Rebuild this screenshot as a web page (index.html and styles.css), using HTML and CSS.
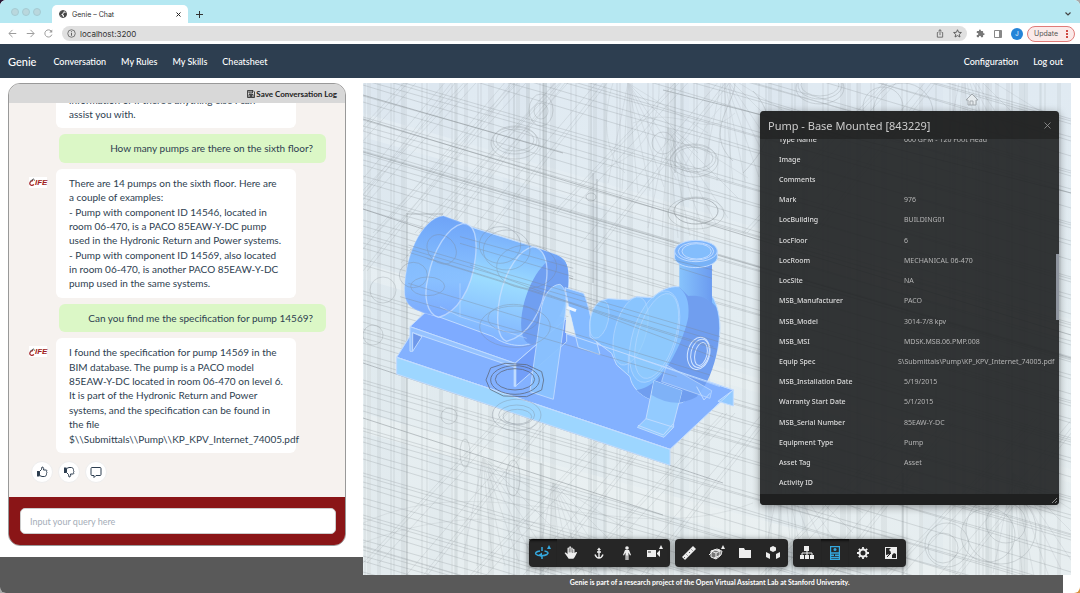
FILE: index.html
```html
<!DOCTYPE html>
<html lang="en">
<head>
    <meta charset="UTF-8">
    <meta name="viewport" content="width=device-width, initial-scale=1.0">
    <title>Genie – Chat</title>
    <link rel="stylesheet" href="styles.css">
</head>
<body>
<div class="window">
    <header class="browser">
        <div class="tabs">
            <div class="lights"><span></span><span></span><span></span></div>
            <div class="tab">
                <svg width="8" height="8" viewBox="0 0 16 16"><circle cx="8" cy="8" r="7" fill="#fff" stroke="#444" stroke-width="2"/><path fill="#444" d="M2 5l3-3 4 0 1 2-3 2 0 2-3 1 3 2 1 4-4-2-3-5zM11 5l3 1 1 4-3 4-2 0 0-3-2-2 1-2z"/></svg>
                <span>Genie – Chat</span>
                <button class="plain close-tab" aria-label="Close tab"><svg width="5" height="5" viewBox="0 0 10 10"><path d="M1 1l8 8M9 1L1 9" stroke="#222" stroke-width="2"/></svg></button>
            </div>
            <button class="plain" aria-label="New tab"><svg width="7" height="7" viewBox="0 0 8 8"><path d="M4 0v8M0 4h8" stroke="#333" stroke-width="1.2"/></svg></button>
            <button class="plain tab-menu" aria-label="Search tabs"><svg width="6" height="4" viewBox="0 0 6 4"><path d="M.5.5L3 3 5.500.5" fill="none" stroke="#444" stroke-width="1.200"/></svg></button>
        </div>
        <div class="toolbar">
            <button class="plain" aria-label="Back"><svg width="9" height="9" viewBox="0 0 12 12"><path d="M11 6H1.500M6 1.200L1.200 6 6 10.800" fill="none" stroke="#999" stroke-width="1.300"/></svg></button>
            <button class="plain" aria-label="Forward"><svg width="9" height="9" viewBox="0 0 12 12"><path d="M1 6h9.500M6 1.200L10.800 6 6 10.800" fill="none" stroke="#999" stroke-width="1.300"/></svg></button>
            <button class="plain" aria-label="Reload"><svg width="9" height="9" viewBox="0 0 12 12"><path d="M10.500 7.500A4.800 4.800 0 1 1 9.600 2.800" fill="none" stroke="#999" stroke-width="1.300"/><path d="M11 .5v4H7z" fill="#999"/></svg></button>
            <div class="address">
                <svg width="9" height="9" viewBox="0 0 12 12"><circle cx="6" cy="6" r="5" fill="none" stroke="#555"/><path d="M6 5.200V9M6 3v1.200" stroke="#555" stroke-width="1.200"/></svg>
                <input type="text" value="localhost:3200" aria-label="Address">
                <button class="plain" aria-label="Share"><svg width="8" height="9" viewBox="0 0 12 13"><path d="M3.500 5H2v7h8V5H8.500M6 9V1M3.500 3L6 .8 8.500 3" fill="none" stroke="#555" stroke-width="1.200"/></svg></button>
                <button class="plain" aria-label="Bookmark"><svg width="9" height="9" viewBox="0 0 12 12"><path d="M6 1l1.500 3.400 3.700.3-2.800 2.400.9 3.600L6 8.800l-3.300 1.900.9-3.600L.8 4.700l3.700-.3z" fill="none" stroke="#555" stroke-width="1.200"/></svg></button>
            </div>
            <button class="plain" aria-label="Extensions"><svg width="9" height="9" viewBox="0 0 24 24"><path fill="#777" d="M20.500 11H19V7a2 2 0 0 0-2-2h-4V3.500a2.500 2.500 0 0 0-5 0V5H4a2 2 0 0 0-2 2v3.800h1.500a2.700 2.700 0 0 1 0 5.400H2V20a2 2 0 0 0 2 2h3.800v-1.500a2.700 2.700 0 0 1 5.400 0V22H17a2 2 0 0 0 2-2v-4h1.500a2.500 2.500 0 0 0 0-5z"/></svg></button>
            <button class="plain" aria-label="Side panel"><svg width="8" height="8" viewBox="0 0 8 8"><path d="M.5.5h7v7h-7z" fill="none" stroke="#888"/><path d="M5 .5h2.500v7H5z" fill="#888"/></svg></button>
            <button class="plain avatar">J</button>
            <button class="plain update">Update <svg width="2" height="8" viewBox="0 0 2 8"><path d="M0 0h2v2H0zM0 3h2v2H0zM0 6h2v2H0z" fill="#cf4a42"/></svg></button>
        </div>
    </header>

    <nav class="nav">
        <a class="brand" href="#">Genie</a>
        <a href="#">Conversation</a>
        <a href="#">My Rules</a>
        <a href="#">My Skills</a>
        <a href="#">Cheatsheet</a>
        <a class="right" href="#">Configuration</a>
        <a href="#">Log out</a>
    </nav>

    <main class="page">
        <section class="chat">
            <div class="chat-header">
                <button class="plain save"><svg width="8" height="8" viewBox="0 0 16 16"><path d="M1 1h11l3 3v11H1zM4 1v5h7V1M4 15V9h8v6M8 2v3M6 11h4M6 13h4" fill="none" stroke="#222" stroke-width="1.600"/></svg>Save Conversation Log</button>
            </div>
            <div class="messages">
                <div class="message"><div class="bubble">information or if there's anything else I can<br>assist you with.</div></div>
                <div class="message user"><div class="bubble">How many pumps are there on the sixth floor?</div></div>
                <div class="message">
                    <div class="logo"><svg width="6" height="8" viewBox="0 0 6 8"><path d="M5 6.500C3 8 .6 7.400.8 5.200 1 3.400 2.600 2.400 4 2.800" fill="none" stroke="#a01c20" stroke-width="1.200"/><path d="M1 3.500L4.500.8 5.500 2.800" fill="none" stroke="#666"/></svg>IFE</div>
                    <div class="bubble">There are 14 pumps on the sixth floor. Here are a couple of examples:<br>- Pump with component ID 14546, located in room 06-470, is a PACO 85EAW-Y-DC pump used in the Hydronic Return and Power systems.<br>- Pump with component ID 14569, also located in room 06-470, is another PACO 85EAW-Y-DC pump used in the same systems.</div>
                </div>
                <div class="message user"><div class="bubble">Can you find me the specification for pump 14569?</div></div>
                <div class="message">
                    <div class="logo"><svg width="6" height="8" viewBox="0 0 6 8"><path d="M5 6.500C3 8 .6 7.400.8 5.200 1 3.400 2.600 2.400 4 2.800" fill="none" stroke="#a01c20" stroke-width="1.200"/><path d="M1 3.500L4.500.8 5.500 2.800" fill="none" stroke="#666"/></svg>IFE</div>
                    <div class="bubble">I found the specification for pump 14569 in the BIM database. The pump is a PACO model 85EAW-Y-DC located in room 06-470 on level 6. It is part of the Hydronic Return and Power systems, and the specification can be found in the file $\\Submittals\\Pump\\KP_KPV_Internet_74005.pdf</div>
                </div>
                <div class="feedback">
                    <button aria-label="Good answer"><svg width="12" height="12" viewBox="0 0 24 24"><path d="M2 10h5v11H2z" fill="#2d3e50"/><path d="M7 11l4-4 1-5c3 0 4 2 3 6h5c2 0 2 2 1 3 1 1 1 3 0 4 0 2 0 3-1 3 0 2-1 3-3 3h-5l-5-2z" fill="none" stroke="#2d3e50" stroke-width="2"/></svg></button>
                    <button aria-label="Bad answer"><svg width="12" height="12" viewBox="0 0 24 24"><path d="M2 3h5v11H2z" fill="#2d3e50"/><path d="M7 13l4 4 1 5c3 0 4-2 3-6h5c2 0 2-2 1-3 1-1 1-3 0-4 0-2 0-3-1-3 0-2-1-3-3-3h-5L7 5z" fill="none" stroke="#2d3e50" stroke-width="2"/></svg></button>
                    <button aria-label="Comment"><svg width="12" height="12" viewBox="0 0 24 24"><path d="M4 3h16q2 0 2 2v12q0 2-2 2h-8l-4 4v-4H4q-2 0-2-2V5q0-2 2-2z" fill="none" stroke="#2d3e50" stroke-width="2"/></svg></button>
                </div>
            </div>
            <form class="query">
                <input type="text" placeholder="Input your query here" aria-label="Input your query here">
            </form>
        </section>

        <section class="viewer">
            <svg class="scene" viewBox="0 0 708 492" preserveAspectRatio="xMidYMid slice">
                <defs>
                    <linearGradient id="sky" x1="0" y1="0" x2="0" y2="1"><stop offset="0" stop-color="#e0eaf2"/><stop offset=".5" stop-color="#e4edf1"/><stop offset="1" stop-color="#e7eef0"/></linearGradient>
                    <linearGradient id="shell" x1=".62" y1=".08" x2=".4" y2=".9"><stop offset="0" stop-color="#76a9f8"/><stop offset=".25" stop-color="#86c2ff"/><stop offset=".5" stop-color="#9cdcff"/><stop offset="1" stop-color="#82b5ff"/></linearGradient>
                    <linearGradient id="cap" x1="0" y1="0" x2="0" y2="1"><stop offset="0" stop-color="#6ba1f7"/><stop offset=".65" stop-color="#84b9ff"/><stop offset="1" stop-color="#79a5fd"/></linearGradient>
                    <linearGradient id="pipe"><stop offset="0" stop-color="#87c3fc"/><stop offset="1" stop-color="#6b9bf0"/></linearGradient>
                    <path id="beam" d="M0 0L708 206M0 3L708 211M0 9L708 208M0 14L708 228M0 25L708 224M0 31L708 243"/>
                    <path id="studs" d="M2 0V492M5 0V492M7 0V492M15 0V492M17 0V492M28 0V492M31 0V492M39 0V492M41 0V492M43 0V492M59 0V492M64 0V492M77 0V492M79 0V492M93 0V492"/>
                    <path id="rafter" d="M-40 150L110-10M-36 150L114-10M-24 150L122-10M-12 180L150-10M0 188L156-10M4 188L160-10"/>
                    <g id="ring"><ellipse rx="22" ry="14"/><ellipse rx="19" ry="11"/><ellipse rx="24" ry="16" cy="3"/></g>
                    <path id="fan" d="M0 0L60 90M0 0L48 96M0 0L36 104M0 0L22 108M0 0L10 110M0 0L-6 108M0 0L-20 100M0 0L70 70M0 0L80 50"/>
                </defs>
                <rect width="708" height="492" fill="url(#sky)"/>

                <!-- tinted wall panels -->
                <g fill="#c9d6e6" opacity=".12">
                    <path d="M8 0h34v492H8zM66 0h22v492H66zM140 0h26v492h-26zM228 0h14v492h-14zM310 0h16v492h-16zM402 0h40v492h-40zM560 0h20v492h-20z"/>
                    <path d="M0 30L708 236v22L0 54zM0 180L708 386v14L0 196zM0 330L708 520v20L0 350z" fill="#fff"/>
                </g>

                <g fill="none" stroke="#858d90" stroke-width=".7">
                    <g opacity=".28">
                        <use href="#studs"/><use href="#studs" x="87"/><use href="#studs" x="149"/><use href="#studs" x="226"/>
                        <use href="#studs" x="303"/><use href="#studs" x="401"/><use href="#studs" x="480"/><use href="#studs" x="585"/><use href="#studs" x="618"/>
                    </g>
                    <g opacity=".36">
                        <use href="#beam" y="-170"/><use href="#beam" y="-118"/><use href="#beam" y="-66"/><use href="#beam" y="-12"/>
                        <use href="#beam" y="34"/><use href="#beam" y="68"/><use href="#beam" y="112"/><use href="#beam" y="151"/>
                        <use href="#beam" y="208"/><use href="#beam" y="246"/><use href="#beam" y="297"/><use href="#beam" y="345"/>
                        <use href="#beam" y="390"/><use href="#beam" y="432"/><use href="#beam" y="464"/>
                    </g>
                    <g opacity=".24">
                        <use href="#rafter"/><use href="#rafter" x="50"/><use href="#rafter" x="92"/><use href="#rafter" x="-60"/>
                        <use href="#rafter" x="230" y="-20"/><use href="#rafter" x="420"/>
                        <use href="#rafter" x="40" y="330"/><use href="#rafter" x="140" y="350"/><use href="#rafter" x="250" y="340"/>
                        <use href="#rafter" x="430" y="350"/><use href="#rafter" x="560" y="345"/>
                    </g>
                    <g opacity=".2">
                        <use href="#fan" x="265" y="0"/><use href="#fan" x="305" y="45"/><use href="#fan" x="360" y="-10"/><use href="#fan" x="600" y="-20"/>
                        <use href="#fan" x="190" y="400"/><use href="#fan" x="420" y="380"/><use href="#fan" x="650" y="390"/><use href="#fan" x="120" y="375"/>
                        <path d="M0 460C100 420 220 430 300 492M0 440C130 380 260 470 390 420M270 40C320 20 340 60 372 30M296 0C298 50 270 76 244 84M318 90C330 70 340 40 362 20M250 0C240 30 240 70 262 90"/>
                    </g>
                    <g opacity=".7">
                        <path d="M0 36L708 252M0 69L708 275M0 126L210 196M0 280L360 400M0 335L300 432M300 7L708 110M0 12L200 70"/>
                        <path d="M181 0V170M183 0V180M230 90V200M234 96V230M312 0V90M178 380V492M540 390V492M44 130V492M44 131H80"/>
                    </g>
                    <g opacity=".4">
                        <use href="#ring" x="331" y="75"/><use href="#ring" x="152" y="57"/>
                        <ellipse cx="178" cy="27" rx="12" ry="16"/><ellipse cx="178" cy="28" rx="7" ry="8"/>
                        <use href="#ring" x="457" y="2"/>
                        <circle cx="20" cy="207" r="13"/><circle cx="10" cy="252" r="10"/>
                        <circle cx="86" cy="333" r="8"/><ellipse cx="102" cy="370" rx="5" ry="14"/><ellipse cx="150" cy="395" rx="7" ry="18"/>
                        <circle cx="300" cy="60" r="11"/><path d="M372 0C372 20 340 50 370 78M390 8C420 40 400 70 380 90"/>
                    </g>
                    <g opacity=".8">
                        <ellipse cx="333" cy="128" rx="22" ry="13"/><ellipse cx="333" cy="130" rx="28" ry="16" opacity=".5"/>
                        <ellipse cx="228" cy="114" rx="5" ry="4" opacity=".7"/>
                    </g>
                    <g opacity=".38">
                        <circle cx="580" cy="465" r="15"/><circle cx="584" cy="462" r="22"/><circle cx="625" cy="452" r="27"/><circle cx="638" cy="446" r="35"/><circle cx="643" cy="440" r="20"/>
                        <circle cx="520" cy="24" r="20"/><circle cx="540" cy="30" r="30"/>
                    </g>
                </g>

                <!-- pump assembly -->
                <g transform="translate(-3 107) scale(.3333)" stroke="#c0dbff" stroke-width="3" stroke-linejoin="round">
                    <path d="M110 502L190 375 620 430 1120 600 930 778z" fill="#83b1ff"/>
                    <path d="M110 502L930 778V826L110 552z" fill="#9dd6ff"/>
                    <path d="M1120 600V648L1074 634z" fill="#93caff"/>
                    <path d="M150 410L300 270 620 385 465 520z" fill="#7eabff"/>
                    <path d="M465 520L620 385V455L465 590z" fill="#729ef8"/>
                    <path d="M150 410L465 520V532L158 428V484H150z" fill="#95c2ff"/>
                    <path d="M158 428L186 440 158 484z" fill="#6e98ea"/>
                    <path d="M465 520V590" stroke-width="8"/>
                    <path d="M250 78C185 85 130 205 135 315 140 350 165 362 235 380L400 440C440 470 510 480 540 440 600 400 630 330 625 250 620 215 600 200 590 195L520 170 345 115z" fill="url(#shell)"/>
                    <path d="M250 78C185 85 130 205 135 315 140 350 160 362 235 380 300 380 350 260 349 170 349 130 335 103 310 99z" fill="url(#cap)" stroke="none" opacity=".75"/>
                    <path d="M624 240C618 205 600 198 575 205 520 240 480 340 484 415 490 470 520 475 545 440 600 400 632 330 624 240z" fill="#709ff1" stroke="none"/>
                    <path d="M520 170L590 195C612 205 620 215 624 240 605 195 570 205 558 230 562 200 550 180 520 170z" fill="#72a5f6" stroke="none"/>
                    <g fill="none" stroke="#cfe3ff" stroke-width="4" opacity=".7">
                        <path d="M310 100C345 100 353 145 346 205 335 300 290 370 235 382 200 370 190 320 204 262 220 180 262 110 310 100z"/>
                        <path d="M520 170C550 175 565 210 560 265 550 370 500 440 440 454 410 445 408 380 420 320 438 235 480 178 520 170z"/>
                        <path d="M300 280V380L500 445M300 380L240 350M550 345C548 310 560 305 585 300" stroke-width="2"/>
                    </g>
                    <path d="M615 293L670 310C683 330 690 380 720 494L655 472 630 370z" fill="#84baff"/>
                    <path d="M622 352L648 362" stroke="#eef6ff" stroke-width="9"/>
                    <path d="M618 385L615 428 645 436 632 375z" fill="#e3edf2" stroke="none"/>
                    <path d="M510 605L545 350C555 305 580 283 600 283 620 295 622 330 615 380L580 628z" fill="#8bc3ff" opacity=".93"/>
                    <path d="M690 395C695 350 715 330 745 326L805 330 830 320 880 323C900 300 930 288 955 290L1056 318C1073 345 1080 380 1080 415 1077 530 1020 610 965 638 900 650 820 620 810 560L770 525 755 490 690 440z" fill="#84bfff"/>
                    <path d="M955 290C1000 310 1040 315 1068 350 1090 410 1075 550 1010 620 960 650 870 645 830 600 920 590 980 420 985 380 990 330 975 305 955 290z" fill="#709eef" stroke="none"/>
                    <g fill="#93d0fd" fill-opacity=".4" stroke="#b4d7ff" stroke-width="2">
                        <ellipse cx="718" cy="388" rx="27" ry="58" transform="rotate(13 718 388)"/>
                        <ellipse cx="812" cy="423" rx="47" ry="105" transform="rotate(15 812 423)"/>
                        <ellipse cx="884" cy="440" rx="66" ry="142" transform="rotate(17 884 440)"/>
                        <ellipse cx="890" cy="438" rx="56" ry="132" transform="rotate(17 890 438)"/>
                    </g>
                    <path d="M958 220L1056 225V345C1045 320 1010 315 985 318L958 292z" fill="url(#pipe)" stroke="none"/>
                    <path d="M944 183V205C954 242 1061 242 1072 205V183z" fill="#78b2f7"/>
                    <ellipse cx="1008" cy="183" rx="64" ry="32" fill="#7db4fa"/>
                    <ellipse cx="1008" cy="184" rx="53" ry="26" fill="none"/>
                    <ellipse cx="1010" cy="184" rx="44" ry="23" fill="#83bdfc"/>
                    <g fill="none" stroke="#d3e5ff">
                        <ellipse cx="1016" cy="490" rx="33" ry="49" transform="rotate(13 1016 490)"/>
                        <ellipse cx="1020" cy="490" rx="27" ry="43" transform="rotate(13 1020 490)"/>
                        <ellipse cx="1023" cy="492" rx="18" ry="35" transform="rotate(13 1023 492)"/>
                    </g>
                    <path d="M920 525L1055 602 1050 625 905 575z" fill="#8bbcff" opacity=".75"/>
                    <path d="M1010 590L1032 630 1050 610" fill="none"/>
                    <path d="M882 572L966 602 941 700V712L912 742 832 712 858 686z" fill="#93cbff"/>
                    <path d="M858 686L941 712M834 706L910 735 941 700" fill="none"/>
                    <path d="M875 615Q915 640 957 638L966 602 882 572z" fill="#7fb2f7" stroke="none"/>
                    <path d="M620 432L1120 600 1055 661M110 502L930 778" fill="none"/>
                    <path d="M805 550V495L1080 590" fill="none" stroke-width="2"/>

                    <!-- steelwork in front of the pump -->
                    <g fill="none" stroke="#7c8590" stroke-width="2" opacity=".5">
                        <path d="M145 165L1080 440M150 178L1075 455M150 188L1060 470M145 280L1050 555M200 205L1070 478M330 225L1060 500"/>
                        <path d="M120 320L950 560M300 140L640 235M300 160L640 260M940 210L1060 240M960 235L1056 265"/>
                        <ellipse cx="245" cy="178" rx="48" ry="40" transform="rotate(45 245 178)"/><ellipse cx="203" cy="289" rx="51" ry="28"/>
                        <ellipse cx="160" cy="255" rx="42" ry="38"/><ellipse cx="465" cy="410" rx="106" ry="62"/><ellipse cx="460" cy="385" rx="76" ry="42"/>
                        <ellipse cx="440" cy="180" rx="70" ry="60"/><ellipse cx="420" cy="165" rx="62" ry="55"/><ellipse cx="500" cy="230" rx="90" ry="65"/>
                        <ellipse cx="470" cy="675" rx="73" ry="47"/><ellipse cx="470" cy="675" rx="54" ry="30"/><ellipse cx="472" cy="680" rx="43" ry="22"/>
                    </g>
                    <g fill="none" stroke="#59606e" stroke-width="3" opacity=".7">
                        <path d="M378 570L392 534 435 520 500 524 545 545 551 570 545 600 500 620 430 618 390 598z"/>
                        <ellipse cx="465" cy="570" rx="73" ry="43"/><ellipse cx="465" cy="568" rx="59" ry="32"/>
                    </g>
                </g>
                <path d="M603 17l6-6 6 6h-2v5h-8v-5zM607 22v-4h3v4" fill="#e6ebee" stroke="#a3a9ae"/>
            </svg>

            <aside class="panel">
                <div class="panel-title"><h2>Pump - Base Mounted [843229]</h2><button class="plain" aria-label="Close"><svg width="7" height="7" viewBox="0 0 7 7"><path d="M.5.5l6 6M6.500.5l-6 6" stroke="#999" stroke-width=".8"/></svg></button></div>
                <div class="panel-body">
                    <table>
                        <tr><th>Type Name</th><td>600 GPM - 120 Foot Head</td></tr>
                        <tr><th>Image</th><td></td></tr>
                        <tr><th>Comments</th><td></td></tr>
                        <tr><th>Mark</th><td>976</td></tr>
                        <tr><th>LocBuilding</th><td>BUILDING01</td></tr>
                        <tr><th>LocFloor</th><td>6</td></tr>
                        <tr><th>LocRoom</th><td>MECHANICAL 06-470</td></tr>
                        <tr><th>LocSite</th><td>NA</td></tr>
                        <tr><th>MSB_Manufacturer</th><td>PACO</td></tr>
                        <tr><th>MSB_Model</th><td>3014-7/8 kpv</td></tr>
                        <tr><th>MSB_MSI</th><td>MDSK.MSB.06.PMP.008</td></tr>
                        <tr><th>Equip Spec</th><td class="file">S\Submittals\Pump\KP_KPV_Internet_74005.pdf</td></tr>
                        <tr><th>MSB_Installation Date</th><td>5/19/2015</td></tr>
                        <tr><th>Warranty Start Date</th><td>5/1/2015</td></tr>
                        <tr><th>MSB_Serial Number</th><td>85EAW-Y-DC</td></tr>
                        <tr><th>Equipment Type</th><td>Pump</td></tr>
                        <tr><th>Asset Tag</th><td>Asset</td></tr>
                        <tr><th>Activity ID</th><td></td></tr>
                    </table>
                    <span class="thumb"></span>
                </div>
                <div class="panel-foot"><svg width="5" height="5" viewBox="0 0 5 5"><path d="M0 5l5-5M3 5l2-2" stroke="#aaa" stroke-width=".8"/></svg></div>
            </aside>

            <div class="tools">
                <div class="tool-group">
                    <button class="active" aria-label="Orbit"><svg width="20" height="20" viewBox="0 0 20 20"><path d="M7 8C3 8.500 2 10 3 11.200c2 2 8 2 11 .3 2-1.500 1-3-2.500-3.500M9 4v4M9 13v3" fill="none" stroke="#35a9df" stroke-width="1.500"/><path d="M9 9.500v5L5.500 12zM16 2l2 4h-4z" fill="#35a9df"/></svg></button>
                    <button aria-label="Pan"><svg width="14" height="14" viewBox="0 0 24 24"><path d="M8 22c-2-4-5-7-7-10 1-2 3-1 5 2V4c0-2 3-2 3 0V2c0-2 3-2 3 0v2c0-2 3-2 3 0v2c1-2 3-1 3 1v5c3-3 5-2 4 0-2 3-3 7-6 10z" fill="#eee"/><path d="M9 4v7M12 3v8M15 6v6" stroke="#222"/></svg></button>
                    <button aria-label="Zoom"><svg width="10" height="13" viewBox="0 0 10 13"><path d="M5 2v9M1 7.500C2 10 3.500 11 5 11s3-1 4-3.500M3 5h4" fill="none" stroke="#eee" stroke-width="1.400"/><path d="M3 3L5 .5 7 3z" fill="#eee"/></svg></button>
                    <button aria-label="Walk"><svg width="10" height="14" viewBox="0 0 10 14"><circle cx="5" cy="2" r="1.800" fill="#eee"/><path d="M3 4h4l2 5-1 .5-1.500-3V14H5.300V9.500h-.6V14H3.500V6.500L2 9.500 1 9z" fill="#eee"/></svg></button>
                    <button aria-label="Camera"><svg width="20" height="20" viewBox="0 0 20 20"><path d="M2 7h9v7H2zM12 10l3-3v7l-3-3zM16 2l2 4h-4z" fill="#eee"/><path d="M3 9h3" stroke="#333"/></svg></button>
                </div>
                <div class="tool-group">
                    <button aria-label="Measure"><svg width="14" height="14" viewBox="0 0 14 14"><path d="M0 11L11 0l3 3L3 14z" fill="#eee"/><path d="M2 11l1 1M4.500 8.500l1 1M7 6l1 1M9.500 3.500l1 1" stroke="#222" stroke-width=".7"/></svg></button>
                    <button aria-label="Section"><svg width="20" height="20" viewBox="0 0 20 20"><path d="M4 8l6-2 3 1v6l-4 3-5-2z" fill="#777"/><path d="M4 8l6-2 3 1v6l-4 3-5-2zM4 8l5 2 4-2M9 10v6M2 12l5-5 8 1-1 4-7 3" fill="none" stroke="#eee"/><path d="M16 2l2 4h-4z" fill="#eee"/></svg></button>
                    <button aria-label="Documents"><svg width="14" height="12" viewBox="0 0 14 12"><path d="M1 1h5l1 2h6v8H1z" fill="#eee"/></svg></button>
                    <button aria-label="Explode"><svg width="16" height="14" viewBox="0 0 16 14"><path d="M8 0l3 1.500v3L8 6 5 4.500v-3zM1 6l4 2v5l-4-2zM15 6l-4 2v5l4-2z" fill="#eee"/></svg></button>
                </div>
                <div class="tool-group">
                    <button aria-label="Model browser"><svg width="14" height="14" viewBox="0 0 14 14"><path d="M4 0h5v5H4zM0 9h4v4H0zM5 9h4v4H5zM10 9h4v4h-4z" fill="#eee"/><path d="M7 5v4M2 9V7h10v2" fill="none" stroke="#eee"/></svg></button>
                    <button class="active" aria-label="Properties"><svg width="10" height="14" viewBox="0 0 10 14"><path d="M.6.6h8.800v12.800H.6z" fill="none" stroke="#35a9df" stroke-width="1.200"/><circle cx="5" cy="3.500" r="1.500" fill="#35a9df"/><path d="M1 7h8M1 9.200h3M5 9.200h4M1 11.500h8" stroke="#35a9df" stroke-width="1.400"/></svg></button>
                    <button aria-label="Settings"><svg width="12" height="12" viewBox="0 0 12 12"><circle cx="6" cy="6" r="3.500" fill="none" stroke="#eee" stroke-width="2"/><path d="M6 0v2M6 10v2M0 6h2M10 6h2M1.800 1.800l1.400 1.400M8.800 8.800l1.400 1.400M10.200 1.800L8.800 3.200M3.200 8.800l-1.400 1.400" stroke="#eee" stroke-width="1.800"/></svg></button>
                    <button aria-label="Full screen"><svg width="12" height="12" viewBox="0 0 12 12"><path d="M0 0h12v12H0z" fill="#eee"/><path d="M1 1h5L4 3l2 2-1 2-4 1zM7 11V8l2-2 2 1v4z" fill="#262626"/><path d="M2 10l4-4" stroke="#262626"/></svg></button>
                </div>
            </div>
        </section>

        <footer class="footer">Genie is part of a research project of the Open Virtual Assistant Lab at Stanford University.</footer>
    </main>
</div>
</body>
</html>
```

FILE: styles.css
```css
* {
    box-sizing: border-box;
}
body {
    margin: 0;
    font-family: Lato, sans-serif;
    background: linear-gradient(135deg, #2b1535 0%, #aaa 30%, #aaa 70%, #d98f3c 100%);
}
a {
    color: inherit;
    text-decoration: none;
}
svg {
    display: block;
    flex: none;
}
.window {
    display: flex;
    flex-direction: column;
    height: 100vh;
    background: white;
    border-radius: 6px;
    overflow: hidden;
}
.plain {
    display: flex;
    align-items: center;
    padding: 0;
    border: none;
    background: none;
    color: inherit;
    font: inherit;
}

/* browser frame */
.browser {
    font-family: Inter, sans-serif;
    font-size: 8px;
    color: #333;
}
.tabs {
    display: flex;
    align-items: center;
    height: 23px;
    padding: 5px 9px 0 11px;
    background: #b5e8f2;
}
.lights {
    display: flex;
    gap: 3px;
    margin: 0 11px 5px 0;
}
.lights span {
    width: 8px;
    height: 8px;
    border: 1px solid #a5cbd3;
    border-radius: 50%;
    background: #b9d7dd;
}
.tab {
    display: flex;
    align-items: center;
    gap: 5px;
    width: 136px;
    height: 18px;
    margin-right: 8px;
    padding: 0 7px;
    border-radius: 5px 5px 0 0;
    background: white;
    font-size: 7px;
}
.close-tab, .tab-menu {
    margin-left: auto;
}
.toolbar {
    display: flex;
    align-items: center;
    gap: 9px;
    height: 21px;
    padding: 0 5px 0 8px;
    background: white;
}
.address {
    display: flex;
    align-items: center;
    flex: 1;
    gap: 9px;
    height: 15px;
    padding: 0 5px;
    border-radius: 8px;
    background: #e0e0e0;
}
.address input {
    flex: 1;
    margin-left: -5px;
    padding: 0;
    border: none;
    background: none;
    color: #333;
    font: inherit;
}
.avatar {
    justify-content: center;
    width: 12px;
    height: 12px;
    border-radius: 50%;
    background: #2584d8;
    color: white;
    font-size: 6px;
}
.update {
    gap: 8px;
    height: 16px;
    margin-left: -5px;
    padding: 0 6px;
    border: 1px solid #e07b78;
    border-radius: 8px;
    background: #fbeae9;
    color: #555;
    font-size: 7px;
}

.nav {
    display: flex;
    align-items: center;
    gap: 15px;
    height: 34px;
    padding: 0 17px 0 8px;
    background: #2d3e50;
    color: white;
    font-size: 9px;
    font-weight: 500;
}
.nav .brand {
    margin-right: 2px;
    font-size: 11px;
}
.nav .right {
    margin-left: auto;
}

/* the viewer reaches down over the footer */
.page {
    display: grid;
    flex: 1;
    grid-template-columns: 363fr 717fr;
    grid-template-rows: minmax(0, 1fr) 18px 18px;
    min-height: 0;
    padding-top: 5px;
}

.chat {
    display: flex;
    flex-direction: column;
    margin: 0 17px 11px 8px;
    border: 1px solid #999;
    border-radius: 12px;
    background: #f6f2ef;
    overflow: hidden;
}
.chat-header {
    display: flex;
    justify-content: flex-end;
    align-items: center;
    height: 19px;
    padding-right: 8px;
    background: #d8d8d8;
}
.save {
    gap: 1px;
    color: #222;
    font-size: 8px;
    font-weight: bold;
}
.messages {
    display: flex;
    flex: 1;
    flex-direction: column;
    justify-content: flex-end;
    gap: 6px;
    min-height: 0;
    padding: 0 19px 14px;
    overflow: hidden;
    color: #2d3e50;
    font-size: 10px;
    line-height: 1.44;
}
.message {
    display: flex;
    flex: none;
    justify-content: flex-end;
    padding-right: 30px;
}
.user {
    padding-right: 0;
}
.bubble {
    width: 240px;
    padding: 7px 13px;
    border-radius: 6px;
    background: white;
}
.user .bubble {
    width: 267px;
    background: #dbf7c6;
    text-align: right;
}
.logo {
    display: flex;
    align-items: center;
    align-self: flex-start;
    height: 11px;
    margin: 8px auto 0 1px;
    background: white;
    color: #a01c20;
    font: italic bold 8px "Liberation Sans", sans-serif;
}
.feedback {
    display: flex;
    flex: none;
    gap: 5px;
    padding: 2px 3px 0;
}
.feedback button {
    display: flex;
    align-items: center;
    justify-content: center;
    width: 22px;
    height: 22px;
    padding: 0;
    border: 1px solid #eee;
    border-radius: 50%;
    background: white;
}
.query {
    padding: 11px 9px 11px 11px;
    background: #8a1517;
}
.query input {
    display: block;
    width: 100%;
    height: 26px;
    padding: 0 9px;
    border: 1px solid #ccc;
    border-radius: 5px;
    background: white;
    font: 9px Lato, sans-serif;
}
.query input::placeholder {
    color: #a5adb8;
}

.viewer {
    position: relative;
    z-index: 1;
    grid-column: 2;
    grid-row: 1 / 3;
    min-height: 0;
    margin-right: 9px;
    overflow: hidden;
}
.scene {
    width: 100%;
    height: 100%;
}

.panel {
    position: absolute;
    top: 28px;
    right: 12px;
    display: flex;
    flex-direction: column;
    width: 299px;
    height: 394px;
    border-radius: 4px;
    background: rgba(36, 38, 39, .93);
    box-shadow: 0 2px 8px rgba(0, 0, 0, .4);
    color: #ddd;
    font-family: "Noto Sans", sans-serif;
    overflow: hidden;
}
.panel-title {
    display: flex;
    align-items: center;
    justify-content: space-between;
    height: 28px;
    padding: 0 8px;
    background: rgba(30, 30, 30, .6);
}
.panel-title h2 {
    margin: 0;
    font-size: 11px;
    font-weight: 400;
    color: #ccc;
}
.panel-body {
    position: relative;
    display: flex;
    flex: 1;
    align-items: flex-end;
    min-height: 0;
    padding: 0 4px 1px 19px;
    overflow: hidden;
}
.panel table {
    width: 100%;
    height: 364px;
    border-collapse: collapse;
    table-layout: fixed;
    font-size: 7px;
    white-space: nowrap;
}
.panel th {
    width: 115px;
    padding: 0;
    font-weight: 500;
    text-align: left;
}
.panel td {
    padding: 0 0 0 10px;
    color: #b4b4b4;
    font-weight: 400;
}
.panel td.file {
    padding-left: 4px;
}
.thumb {
    position: absolute;
    top: 115px;
    right: 0;
    width: 3px;
    height: 66px;
    background: #8f959f;
}
.panel-foot {
    display: flex;
    align-items: flex-end;
    justify-content: flex-end;
    height: 11px;
    padding: 2px;
    background: #1f2020;
}

.tools {
    position: absolute;
    right: 0;
    bottom: 8px;
    left: 0;
    display: flex;
    justify-content: center;
    gap: 5px;
}
.tool-group {
    display: flex;
    height: 28px;
    padding-right: 1px;
    border-radius: 4px;
    background: #262626;
    box-shadow: 0 1px 6px rgba(0, 0, 0, .5);
}
.tool-group button {
    display: flex;
    align-items: center;
    justify-content: center;
    width: 28px;
    padding: 0;
    border: none;
    background: none;
}
.tool-group .active {
    box-shadow: inset 0 3px 3px -2px black;
}

.footer {
    grid-column: 1 / 3;
    grid-row: 2 / 4;
    margin-right: 17px;
    padding: 20px 0 0 33%;
    background: #595959;
    color: white;
    font-size: 7px;
    font-weight: bold;
    line-height: 10px;
    text-align: center;
}
```
